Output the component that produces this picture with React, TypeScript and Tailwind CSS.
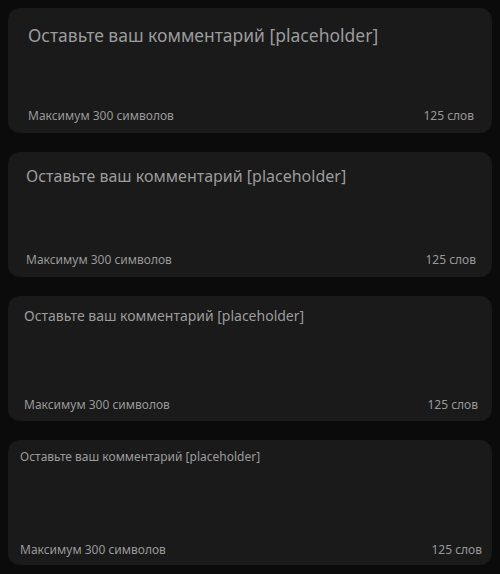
import clsx from "clsx";

type Size = "lg" | "md" | "sm" | "xs";

const sizes: Record<Size, { box: string; title: string }> = {
  lg: { box: "pl-5 pr-[18px] pt-[13px] pb-[9px]", title: "text-[17.5px] leading-[28px]" },
  md: { box: "pl-[18px] pr-4 pt-[12px] pb-[9px]", title: "text-[16px] leading-[24px]" },
  sm: { box: "pl-4 pr-[14px] pt-[10px] pb-[8px]", title: "text-[14px] leading-[20px]" },
  xs: { box: "pl-3 pr-[10px] pt-[8px] pb-[7px]", title: "text-[12px] leading-[18px]" },
};

function CommentBox({ size }: { size: Size }) {
  const s = sizes[size];
  return (
    <div className={clsx("flex h-[125px] flex-col justify-between rounded-xl bg-[#1a1a1a]", s.box)}>
      <p className={clsx("text-[#9c9c9c]", s.title)}>Оставьте ваш комментарий [placeholder]</p>
      <div className="flex items-center justify-between text-[12px] leading-4 text-[#999999]">
        <span>Максимум 300 символов</span>
        <span>125 слов</span>
      </div>
    </div>
  );
}

export default function App() {
  return (
    <div
      className="flex min-h-[574px] flex-col gap-[19px] bg-[#0b0b0b] p-2"
      style={{ fontFamily: '"Noto Sans", sans-serif' }}
    >
      <CommentBox size="lg" />
      <CommentBox size="md" />
      <CommentBox size="sm" />
      <CommentBox size="xs" />
    </div>
  );
}
